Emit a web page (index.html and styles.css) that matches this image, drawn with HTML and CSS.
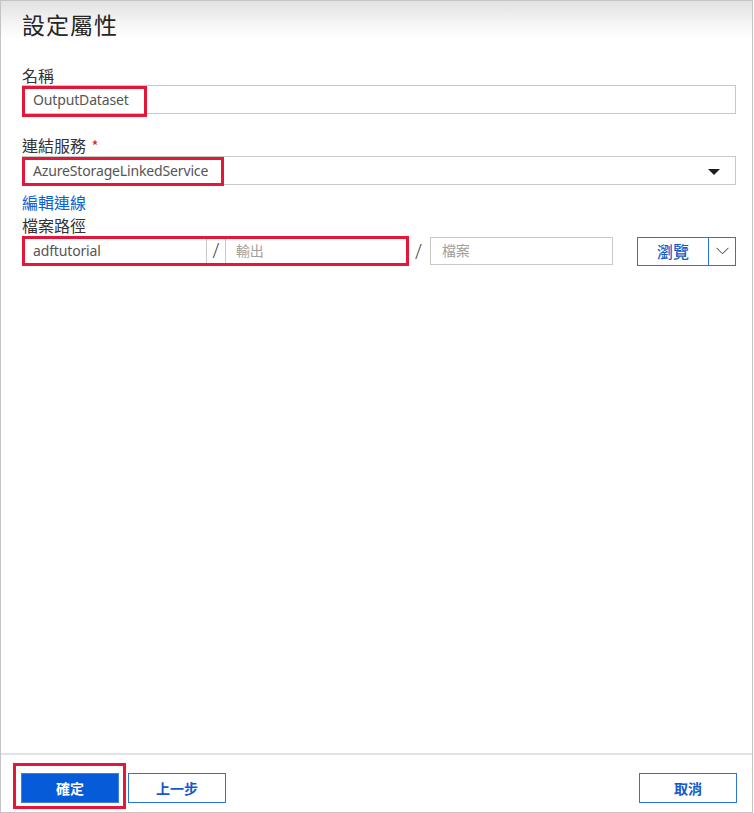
FILE: index.html
```html
<!DOCTYPE html>
<html lang="zh-Hant">
<head>
<meta charset="utf-8">
<title>設定屬性</title>
<link rel="stylesheet" href="styles.css">
</head>
<body>
<div class="panel">
  <div class="header">
    <h1 class="title">設定屬性</h1>
  </div>
  <div class="main">
    <div class="label">名稱</div>
    <div class="field">
      <div class="input">OutputDataset</div>
      <span class="hl hl-name"></span>
    </div>

    <div class="label label-2">連結服務 <span class="req">*</span></div>
    <div class="field">
      <div class="input select">
        <span>AzureStorageLinkedService</span>
        <span class="caret"></span>
      </div>
      <span class="hl hl-service"></span>
    </div>

    <a class="link" href="#">編輯連線</a>
    <div class="label label-3">檔案路徑</div>
    <div class="path-row">
      <div class="field">
        <div class="group">
          <div class="seg seg-a">adftutorial</div>
          <div class="sep">/</div>
          <div class="seg seg-b placeholder">輸出</div>
        </div>
        <span class="hl hl-path"></span>
      </div>
      <span class="slash">/</span>
      <div class="input file placeholder">檔案</div>
      <div class="browse">
        <span class="browse-main">瀏覽</span>
        <span class="browse-split">
          <svg width="13" height="8" viewBox="0 0 13 8"><path d="M0.5 0.8 L6.5 6.8 L12.5 0.8" fill="none" stroke="#333" stroke-width="1"/></svg>
        </span>
      </div>
    </div>
  </div>
  <div class="footer">
    <div class="ok-wrap">
      <button class="btn btn-primary">確定</button>
      <span class="hl hl-ok"></span>
    </div>
    <button class="btn btn-outline">上一步</button>
    <button class="btn btn-outline btn-right">取消</button>
  </div>
</div>
</body>
</html>
```
FILE: styles.css
```css
* { box-sizing: border-box; }
html, body { margin: 0; padding: 0; background: #fff; }
body {
  font-family: "Segoe UI", "Noto Sans", "Noto Sans CJK TC", sans-serif;
  color: #333;
}
.panel {
  width: 753px;
  height: 813px;
  border: 1px solid #c4c4c4;
  display: flex;
  flex-direction: column;
  background: #fff;
}
.header {
  height: 39px;
  padding-left: 21px;
  background: linear-gradient(#e2e2e2 0, #f6f6f6 24px, #fff 38px);
}
.title {
  margin: 0;
  padding-top: 7px;
  font-size: 23px;
  line-height: 32px;
  font-weight: 400;
  color: #262626;
  font-family: "Noto Sans CJK TC", sans-serif;
  letter-spacing: 1px;
}
.main {
  flex: 1;
  padding: 25px 16px 0 21px;
}
.label {
  font-size: 16px;
  line-height: 20px;
  color: #333;
  font-family: "Noto Sans CJK TC", sans-serif;
}
.label-2 { margin-top: 21px; }
.label-3 { margin-top: 3px; }
.req { color: #d0243b; font-size: 15px; margin-left: 2px; }
.field { position: relative; }
.input {
  height: 29px;
  border: 1px solid #c8c8c8;
  padding: 0 10px;
  font-size: 14px;
  line-height: 27px;
  color: #555;
  background: #fff;
  letter-spacing: -0.15px;
}
.select {
  display: flex;
  justify-content: space-between;
  align-items: center;
  padding-right: 15px;
}
.caret {
  width: 0; height: 0;
  border-left: 6px solid transparent;
  border-right: 6px solid transparent;
  border-top: 6px solid #1e1e1e;
  margin-top: 3px;
}
.link {
  display: block;
  margin-top: 7px;
  font-size: 16px;
  line-height: 20px;
  color: #0b62d6;
  text-decoration: none;
  font-family: "Noto Sans CJK TC", sans-serif;
  width: max-content;
}
.path-row {
  margin-top: 1px;
  display: flex;
  align-items: center;
  height: 30px;
}
.group {
  display: flex;
  width: 385px;
  height: 30px;
  border: 1px solid #c8c8c8;
}
.seg {
  font-size: 14px;
  line-height: 28px;
  padding: 0 10px;
  color: #555;
  letter-spacing: -0.15px;
}
.seg-a { width: 183px; }
.sep {
  width: 20px;
  border-left: 1px solid #c8c8c8;
  border-right: 1px solid #c8c8c8;
  text-align: center;
  font-size: 20px;
  line-height: 28px;
  color: #444;
  font-weight: 300;
  font-family: "Open Sans", sans-serif;
}
.seg-b { flex: 1; }
.placeholder { color: #a0a0a0; }
.slash {
  width: 23px;
  text-align: center;
  font-size: 20px;
  color: #444;
  font-weight: 300;
  font-family: "Open Sans", sans-serif;
}
.file {
  width: 183px;
  height: 28px;
  padding-left: 11px;
  line-height: 26px;
}
.browse {
  margin-left: auto;
  display: flex;
  height: 29px;
  border: 1.5px solid #2a74e0;
  width: 99px;
}
.browse-main {
  width: 70px;
  text-align: center;
  font-size: 16px;
  line-height: 26px;
  color: #1659c7;
  font-weight: 500;
  font-family: "Noto Sans CJK TC", sans-serif;
}
.browse-split {
  flex: 1;
  border-left: 1.5px solid #2a74e0;
  display: flex;
  align-items: center;
  justify-content: center;
}
.hl {
  position: absolute;
  border: 3px solid #e3173a;
  pointer-events: none;
}
.hl-name { left: 0; top: 1px; width: 125px; height: 31px; }
.hl-service { left: 0; top: 1px; width: 202px; height: 29px; }
.hl-path { left: 0; top: 0; width: 387px; height: 30px; }
.footer {
  height: 59px;
  border-top: 2px solid #e2e2e2;
  display: flex;
  align-items: flex-start;
  padding: 18px 15px 0 20px;
  gap: 9px;
}
.ok-wrap { position: relative; }
.hl-ok { left: -8px; top: -10px; width: 113px; height: 46px; }
.btn {
  width: 98px;
  height: 30px;
  font-family: "Noto Sans CJK TC", sans-serif;
  font-size: 14px;
  font-weight: 700;
  cursor: pointer;
  padding: 0;
  display: block;
}
.btn-primary {
  background: #055bd8;
  color: #fff;
  border: 1px solid #3c7fe0;
}
.btn-outline {
  background: #fff;
  color: #1259c9;
  border: 1.5px solid #2a74e0;
}
.btn-right { margin-left: auto; }
```
